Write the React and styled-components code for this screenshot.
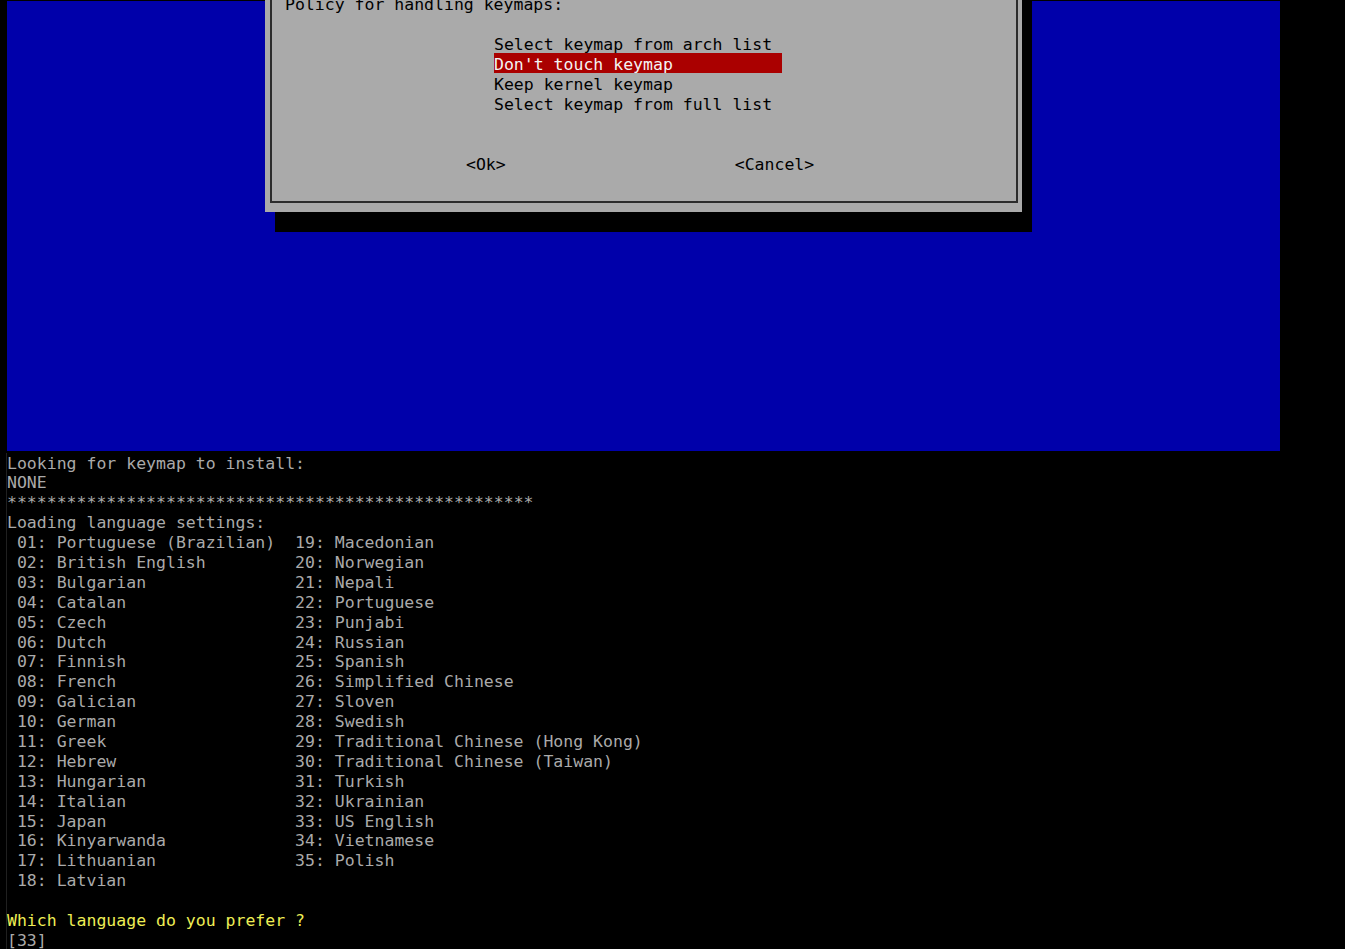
import React from "react";
import styled, { createGlobalStyle } from "styled-components";

const ROW = 19.9;
const DROW = 20;

const GlobalStyle = createGlobalStyle`
  html, body { margin: 0; padding: 0; background: #000; }
  body { font-family: "DejaVu Sans Mono", "Liberation Mono", monospace; }
`;

const Screen = styled.div`
  width: 1345px;
  height: 949px;
  overflow: hidden;
  background: #000;
  padding: 1px 0 0 6px;
  box-sizing: border-box;
  font-family: "DejaVu Sans Mono", "Liberation Mono", monospace;
  font-size: 16.5px;
`;

const BlueArea = styled.div`
  display: flex;
  flex-direction: column;
  align-items: flex-start;
  margin-left: 1px;
  width: 1273px;
  height: 450px;
  background: #0000aa;
  padding-left: 258px;
  box-sizing: border-box;
`;

const Dialog = styled.div`
  margin-top: -40px;
  width: 757px;
  box-sizing: border-box;
  background: #aaaaaa;
  padding: 10px 4px 9px 5px;
  box-shadow: 10px 20px 0 0 #000;
`;

const Frame = styled.div`
  border: 2px solid #2c2c2c;
  padding: 20px 0 28px 13px;
`;

const Line = styled.div`
  height: ${ROW}px;
  box-sizing: border-box;
  padding-top: 3px;
  line-height: ${ROW - 3}px;
  white-space: pre;
  color: ${(p) => p.$color || "#aaaaaa"};
`;

const DialogLine = styled(Line)`
  height: ${DROW}px;
  line-height: ${DROW - 3}px;
  color: #000;
`;

const Spacer = styled.div`
  height: ${(p) => p.$rows * DROW}px;
`;

const Menu = styled.div`
  margin-left: 209px;
  width: 29ch;
`;

const MenuItem = styled(DialogLine)`
  color: ${(p) => (p.$active ? "#f4f4f4" : "#000")};
  background: ${(p) => (p.$active ? "#aa0000" : "transparent")};
`;

const Buttons = styled.div`
  display: flex;
  gap: 229px;
  margin-left: 181px;
`;

const Button = styled(DialogLine)``;

const Console = styled.div`
  margin-top: 1.5px;
  border-left: 1px solid #202020;
`;

const LangGrid = styled.div`
  display: grid;
  grid-template-columns: 29ch auto;
`;

const menuItems = [
  "Select keymap from arch list",
  "Don't touch keymap",
  "Keep kernel keymap",
  "Select keymap from full list",
];

const left = [
  "Portuguese (Brazilian)",
  "British English",
  "Bulgarian",
  "Catalan",
  "Czech",
  "Dutch",
  "Finnish",
  "French",
  "Galician",
  "German",
  "Greek",
  "Hebrew",
  "Hungarian",
  "Italian",
  "Japan",
  "Kinyarwanda",
  "Lithuanian",
  "Latvian",
];

const right = [
  "Macedonian",
  "Norwegian",
  "Nepali",
  "Portuguese",
  "Punjabi",
  "Russian",
  "Spanish",
  "Simplified Chinese",
  "Sloven",
  "Swedish",
  "Traditional Chinese (Hong Kong)",
  "Traditional Chinese (Taiwan)",
  "Turkish",
  "Ukrainian",
  "US English",
  "Vietnamese",
  "Polish",
];

const pad = (n) => String(n).padStart(2, "0");

export default function App() {
  return (
    <>
      <GlobalStyle />
      <Screen>
        <BlueArea>
          <Dialog>
            <Frame>
              <DialogLine>Policy for handling keymaps:</DialogLine>
              <Spacer $rows={1} />
              <Menu>
                {menuItems.map((m, i) => (
                  <MenuItem key={m} $active={i === 1}>
                    {m}
                  </MenuItem>
                ))}
              </Menu>
              <Spacer $rows={2} />
              <Buttons>
                <Button>{"<Ok>"}</Button>
                <Button>{"<Cancel>"}</Button>
              </Buttons>
            </Frame>
          </Dialog>
        </BlueArea>
        <Console>
          <Line>Looking for keymap to install:</Line>
          <Line>NONE</Line>
          <Line>{"*".repeat(53)}</Line>
          <Line>Loading language settings:</Line>
          <LangGrid>
            {left.map((l, i) => (
              <React.Fragment key={l}>
                <Line>{` ${pad(i + 1)}: ${l}`}</Line>
                <Line>{right[i] ? `${pad(i + 19)}: ${right[i]}` : ""}</Line>
              </React.Fragment>
            ))}
          </LangGrid>
          <Line />
          <Line $color="#eeee55">Which language do you prefer ?</Line>
          <Line>[33]</Line>
        </Console>
      </Screen>
    </>
  );
}
